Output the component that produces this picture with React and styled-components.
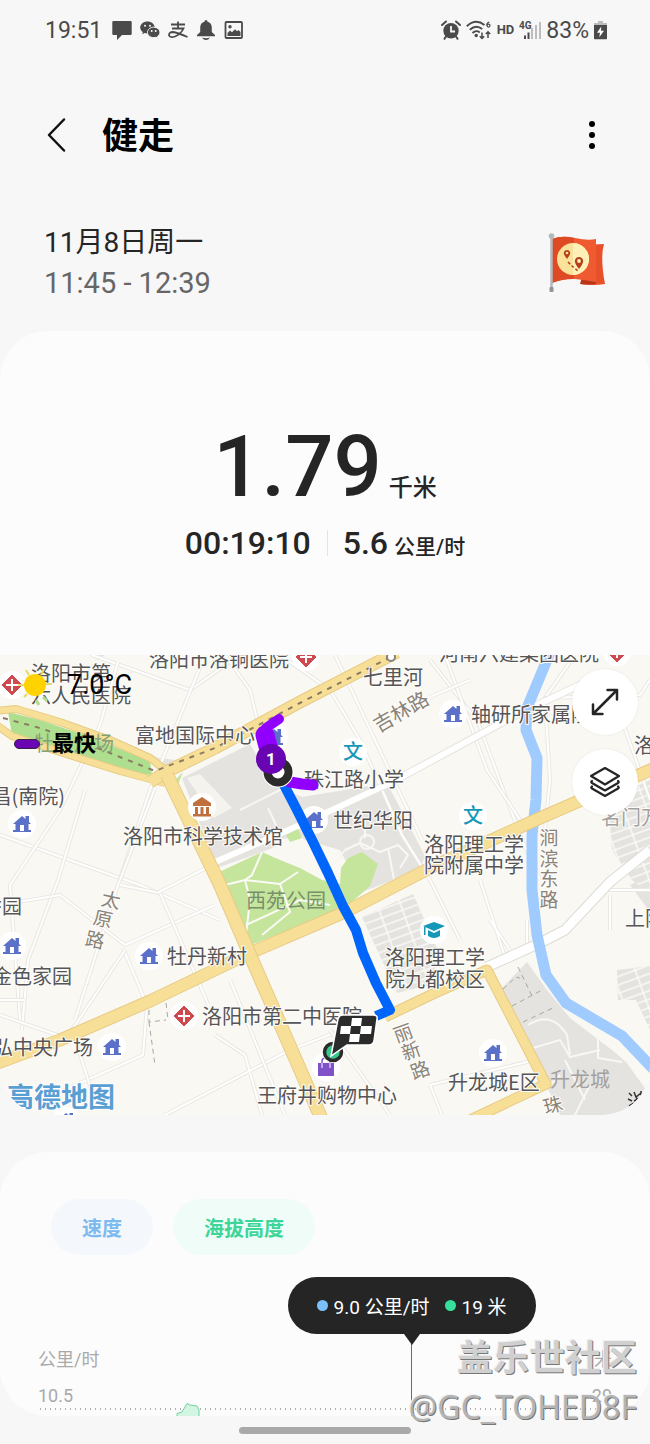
import React from "react";
import styled, { createGlobalStyle, css } from "styled-components";

const GlobalStyle = createGlobalStyle`
  *, *::before, *::after { box-sizing: border-box; }
  body {
    margin: 0;
    background: #f7f7f7;
    color: #252525;
    font-family: Roboto, "Noto Sans CJK SC", sans-serif;
  }
  button { font: inherit; border: 0; padding: 0; background: none; cursor: pointer; }
  svg { display: block; }
  h1, p { margin: 0; }
`;

const Page = styled.div`
  position: relative;
  overflow: hidden;
`;

/* ---------- status bar ---------- */

const StatusBar = styled.div`
  display: flex;
  justify-content: space-between;
  align-items: center;
  height: 60px;
  padding: 0 43px 0 45px;
  color: #4a4a4a;
  font-size: 23px;
`;

const StatusGroup = styled.div`
  display: flex;
  align-items: center;
  gap: ${(p) => p.$gap}px;
`;

const StatusIcons = styled(StatusGroup)`
  margin-left: 2px;
`;

const HdMark = styled.span`
  font-size: 13px;
  font-weight: 700;
  line-height: 16px;
`;

const ChatIcon = () => (
  <svg width="20" height="20" viewBox="0 0 20 20" fill="#4a4a4a">
    <path d="M1.500 1h17a1.200 1.200 0 0 1 1.200 1.200v11.600a1.200 1.200 0 0 1-1.200 1.200H10l-5 5v-5H1.500A1.200 1.200 0 0 1 .300 13.800V2.200A1.200 1.200 0 0 1 1.500 1z" />
  </svg>
);

const WechatIcon = () => (
  <svg width="20" height="20" viewBox="0 0 20 20">
    <path fill="#4a4a4a" d="M7.500 1.500C3.400 1.500.200 4.200.200 7.500c0 1.900 1 3.500 2.600 4.600l-.600 2.100 2.400-1.200c.900.300 1.900.500 2.900.500 4 0 7.200-2.700 7.200-6s-3.200-6-7.200-6z" />
    <g fill="#f7f7f7">
      <circle cx="5" cy="5.800" r="1" /><circle cx="10" cy="5.800" r="1" />
    </g>
    <path fill="#4a4a4a" stroke="#f7f7f7" strokeWidth="1" d="M13.700 7.200c-3.500 0-6.200 2.300-6.200 5.200s2.700 5.200 6.200 5.200c.800 0 1.500-.100 2.200-.300l2 1.100-.500-1.900c1.500-1 2.500-2.400 2.500-4.100 0-2.900-2.800-5.200-6.200-5.200z" />
    <g fill="#f7f7f7">
      <circle cx="11.700" cy="11" r="1" /><circle cx="15.700" cy="11" r="1" />
    </g>
  </svg>
);

/* Alipay mark */
const AlipayIcon = () => (
  <svg width="20" height="20" viewBox="0 0 20 20" fill="none" stroke="#4a4a4a" strokeWidth="1.800">
    <path d="M3 4.500H17M10 1.500V8.500M4 8.500H15.500Q13 14 7 16.500Q2 18 1 15.500Q.800 12 5 12Q9 12.300 19.500 17" />
  </svg>
);

const BellIcon = () => (
  <svg width="20" height="20" viewBox="0 0 20 20" fill="#4a4a4a">
    <path d="M10 0a1.500 1.500 0 0 0-1.500 1.500v.300C5.700 2.500 4.200 4.800 4.200 7.500v4.500L1 15v1.300h18V15l-3.200-3V7.500c0-2.700-1.500-5-4.300-5.700v-.300A1.500 1.500 0 0 0 10 0z" />
    <path d="M6 17.500q4 1.500 8 0Q12.500 20 10 20t-4-2.500z" />
  </svg>
);

const ImageIcon = () => (
  <svg width="20" height="20" viewBox="0 0 20 20">
    <rect x="1.500" y="2" width="16.500" height="16" rx="1" fill="none" stroke="#4a4a4a" strokeWidth="1.800" />
    <circle cx="6" cy="6.700" r="1.700" fill="#4a4a4a" />
    <path fill="#4a4a4a" d="M3.500 16v-3l2.500-2.500 2 1.800 3-3 2 2L14.500 10l2 2v4z" />
  </svg>
);

const AlarmIcon = () => (
  <svg width="20" height="20" viewBox="0 0 20 20">
    <circle cx="10" cy="10.800" r="7.700" fill="#4a4a4a" />
    <path d="M1 5l4-3.500M19 5l-4-3.500M5 16.500l-1.500 2.300M15 16.500l1.500 2.300" stroke="#4a4a4a" strokeWidth="2" strokeLinecap="round" />
    <path d="M10 6v5.500h4" fill="none" stroke="#f7f7f7" strokeWidth="1.800" />
  </svg>
);

const WifiIcon = () => (
  <svg width="26" height="20" viewBox="0 0 26 20" fill="none" stroke="#4a4a4a" strokeWidth="1.900">
    <path d="M.800 6.200Q9.500-2 18.500 5M3.800 9.800Q10 4 16.200 9M6.500 13Q10 9.600 13.800 12.400" />
    <circle cx="10.200" cy="15.500" r="1.700" fill="#4a4a4a" stroke="none" />
    <path d="M16 12.500v6M13.800 16.300l2.200 2.200 2.200-2.200M22 18v-6M19.800 14l2.200-2.200 2.200 2.200" strokeWidth="1.500" />
    <path d="M23.300 2.200q-2.500.300-2.500 3.300" strokeWidth="1.200" />
    <circle cx="22.500" cy="5.600" r="1.500" strokeWidth="1.200" />
  </svg>
);

const SignalIcon = () => (
  <svg width="22" height="20" viewBox="0 0 22 20">
    <g fill="#bdbdbd">
      <rect x="12" y="8" width="2" height="11" /><rect x="16" y="5" width="2" height="14" /><rect x="20" y="2" width="2" height="17" />
    </g>
    <g fill="#4a4a4a">
      <rect x="5" y="15.500" width="2" height="3.500" /><rect x="8.500" y="12.500" width="2" height="6.500" />
    </g>
    <text x="0" y="8.500" fontSize="10" fontWeight="700" fill="#4a4a4a">4G</text>
  </svg>
);

const BatteryIcon = () => (
  <svg width="13" height="20" viewBox="0 0 13 20">
    <path d="M4 1h5v2h4v4H0V3h4z" fill="#bdbdbd" />
    <path d="M0 5h13v13.500a.700.700 0 0 1-.700.700H.700a.700.700 0 0 1-.700-.700z" fill="#4a4a4a" />
    <path d="M7.300 6.500L3 12.700h3l-.700 4.500L10 10.800H7z" fill="#fff" />
  </svg>
);

/* ---------- header ---------- */

const Header = styled.header`
  display: flex;
  align-items: center;
  margin-top: 40px;
  height: 70px;
  padding: 0 44px;
`;

const IconButton = styled.button`
  display: grid;
  place-items: center;
  width: 28px;
  height: 40px;
`;

const Title = styled.h1`
  flex: 1;
  margin-left: 30px;
  padding-top: 4px;
  color: #000;
  font-size: 36px;
  font-weight: 700;
  line-height: 52px;
`;

const Session = styled.section`
  display: flex;
  justify-content: space-between;
  align-items: center;
  padding: 52px 44px 27px;
`;

const SessionLine = styled.p`
  font-size: ${(p) => (p.$muted ? 29 : 28)}px;
  line-height: 41px;
  color: ${(p) => (p.$muted ? "#666" : "#252525")};
`;

const FlagBadge = () => (
  <svg width="58" height="62" viewBox="0 0 58 62">
    <path d="M36 13l20-1q-4 14 1 40-12 2-24 0z" fill="#e8502a" />
    <path d="M34 45l14 2v5q-8 1-16 0z" fill="#b93718" />
    <path d="M4 7q10-4 23-1t21 1v43q-11-2-21-3T4 51z" fill="#ef5a30" />
    <path d="M4 7q10-4 22-1v41Q14 47 4 51z" fill="#de4a24" />
    <circle cx="25" cy="27" r="16" fill="#fbe29a" />
    <path d="M25 11a16 16 0 0 1 0 32z" fill="#fff0b8" />
    <path d="M20 30l4 4 6 5" fill="none" stroke="#b5401c" strokeWidth="1.500" strokeDasharray="3 2" />
    <path d="M19 27q-4-5-3-7a3.200 3.200 0 0 1 6 0q1 2-3 7zM31 37q-5-6-4-9a4.200 4.200 0 0 1 8 0q1 3-4 9z" fill="#b5401c" />
    <circle cx="19" cy="21" r="1.300" fill="#fbe29a" /><circle cx="31" cy="29" r="1.900" fill="#fff0b8" />
    <path d="M3.500 6v50" stroke="#b4b8bd" strokeWidth="2.500" />
    <circle cx="3.500" cy="4" r="2.800" fill="#b4b8bd" />
    <rect x="1.500" y="55" width="4" height="5" rx="1" fill="#8f9499" />
  </svg>
);

/* ---------- cards ---------- */

const Card = styled.section`
  background: #fcfcfc;
  border-radius: 48px;
  overflow: hidden;
`;

const Stats = styled.div`
  padding: 86px 16px 92px;
`;

const StatRow = styled.div`
  display: flex;
  justify-content: center;
  align-items: baseline;
  ${(p) =>
    p.$large
      ? css`font-size: 85px; line-height: 100px; gap: 7px;`
      : css`font-size: 32px; line-height: 40px; margin-top: 6px;`}
  font-weight: 500;
`;

const Unit = styled.span`
  font-size: ${(p) => p.$size}px;
  line-height: 32px;
`;

const StatPart = styled.span`
  display: inline-flex;
  align-items: baseline;
  gap: 6px;
  & + & {
    margin-left: 16px;
    padding-left: 16px;
    background: linear-gradient(#e4e4e4, #e4e4e4) left center / 1px 26px no-repeat;
  }
`;

/* ---------- map ---------- */

const MapFrame = styled.div`
  position: relative;
  border-radius: 0 0 48px 48px;
  overflow: hidden;
`;

const MapSvg = styled.svg`
  width: 100%;
  height: auto;
  background: #faf8f3;
`;

const MapText = styled.text`
  font-family: "Noto Sans CJK SC", sans-serif;
  font-size: ${(p) => p.$size || 20}px;
  font-weight: ${(p) => p.$weight || 400};
  fill: ${(p) => p.$color || "#555557"};
  stroke: ${(p) => p.$halo || "#fdfcf9"};
  stroke-width: ${(p) => (p.$halo === "none" ? 0 : 2)}px;
  paint-order: stroke;
`;

const MapInfo = styled.div`
  position: absolute;
  top: 12px;
  left: 14px;
  color: #000;
`;

const Weather = styled.div`
  display: flex;
  align-items: center;
  gap: 11px;
  height: 36px;
  font-size: 27px;
`;

const Legend = styled.div`
  display: flex;
  align-items: center;
  gap: 12px;
  margin-top: 25px;
  font-size: 22px;
  font-weight: 700;
  line-height: 32px;
`;

const LegendSwatch = styled.i`
  width: 26px;
  height: 10px;
  border: 1px solid #35204a;
  border-radius: 5px;
  background: #6a05b4;
`;

const MapTools = styled.div`
  position: absolute;
  top: 14px;
  right: 12px;
  display: flex;
  flex-direction: column;
  gap: 14px;
`;

const MapButton = styled.button`
  display: grid;
  place-items: center;
  width: 66px;
  height: 66px;
  border-radius: 50%;
  background: #fff;
  box-shadow: 0 0 2px rgba(0, 0, 0, 0.1);
`;

const labels = [
  [31, 681, "洛阳市第"],
  [31, 703, "六人民医院"],
  [149, 667, "洛阳市洛铜医院"],
  [363, 685, "七里河"],
  [135, 743, "富地国际中心"],
  [-16, 804, "昌(南院)", "end"],
  [123, 844, "洛阳市科学技术馆"],
  [304, 787, "珠江路小学"],
  [333, 828, "世纪华阳"],
  [471, 722, "轴研所家属院"],
  [439, 661, "河南六建集团医院"],
  [634, 753, "洛阳"],
  [424, 852, "洛阳理工学"],
  [424, 873, "院附属中学"],
  [167, 964, "牡丹新村"],
  [385, 965, "洛阳理工学"],
  [385, 987, "院九都校区"],
  [202, 1024, "洛阳市第二中医院"],
  [625, 926, "上阳"],
  [-18, 914, "香园"],
  [-8, 984, "金色家园"],
  [-7, 1055, "弘中央广场"],
  [448, 1090, "升龙城E区"],
  [257, 1103, "王府井购物中心"],
];

const streetChars = [
  [401, 719, "吉林路", -30],
  [549, 845, "涧", 0],
  [549, 866, "滨", 0],
  [549, 886, "东", 0],
  [549, 907, "路", 0],
  [111, 907, "太", 12],
  [103, 926, "原", 12],
  [95, 947, "路", 12],
  [403, 1040, "丽", -20],
  [411, 1058, "新", -20],
  [420, 1077, "路", -20],
  [553, 1112, "珠", -15],
];

const houses = [[22, 824], [12, 946], [149, 956], [112, 1047], [314, 820], [453, 714], [493, 1053], [274, 737], [66, 1121]];
const hospitals = [[12, 685], [306, 657], [617, 652], [184, 1016]];

const lanes = [
  "M0 835L75 862L140 885L220 920",
  "M92 655L190 690L240 655",
  "M118 662L100 725L60 810L10 885L20 1020",
  "M205 655L150 790L118 885L75 1020",
  "M155 788L120 880",
  "M225 655L250 690L262 740",
  "M85 790L58 880L28 960L22 1030",
  "M0 905L60 895L125 945L215 905",
  "M120 885L160 893L208 1004",
  "M157 893L218 862",
  "M123 948L147 1005L143 1055L60 1092",
  "M125 950L72 1030L98 1110",
  "M0 1015L60 1036M0 1000H25",
  "M280 655L330 690L360 740L402 835L430 880L460 940",
  "M335 655L422 840",
  "M430 660L478 722L522 840L540 880",
  "M445 655L487 770L527 830",
  "M430 697L470 680M575 655L545 698L550 780L545 830",
  "M545 698L640 695L650 680M615 700L650 800",
  "M480 880L506 960M490 920L510 950M527 920V950",
  "M600 890H650M610 895V930",
  "M215 1035L245 1055L262 1115M165 1115L290 1050L420 1000",
  "M230 980L285 1115M330 1030L390 1115",
  "M430 1085L535 1060M430 1085L442 1115",
];

const House = ({ at: [x, y] }) => (
  <g transform={`translate(${x} ${y})`}>
    <circle r="14" fill="#fff" />
    <path fill="#5b70c8" d="M-9 0L0-8l3.500 3V-8H7v6l2 2H6.500v6H9v2H-9V6h2.500V0z" />
    <rect x="-2" y="1" width="4" height="6" fill="#fff" />
  </g>
);

const Hospital = ({ at: [x, y] }) => (
  <g transform={`translate(${x} ${y})`}>
    <circle r="14" fill="#fff" />
    <path d="M0-10L10 0L0 10L-10 0z" fill="#cf4a4e" stroke="#cf4a4e" strokeLinejoin="round" />
    <path d="M-6 0H6M0-6V6" stroke="#fff" strokeWidth="2" />
  </g>
);

const Road = ({ d, width = 12 }) => (
  <>
    <path d={d} fill="none" stroke="#e6cb84" strokeWidth={width} strokeLinejoin="round" />
    <path d={d} fill="none" stroke="#f8df98" strokeWidth={width - 2} strokeLinejoin="round" />
  </>
);

const RouteMap = () => (
  <MapSvg viewBox="0 655 650 460" role="img" aria-label="路线地图">
    <defs>
      <pattern id="blocks" width="22" height="8" patternUnits="userSpaceOnUse" patternTransform="rotate(-20)">
        <path d="M0 1H22M1 0V8" stroke="#fbfaf7" strokeWidth="1.500" />
      </pattern>
    </defs>

    {/* built-up areas */}
    <g fill="#e5e3df">
      <path d="M182 778L250 744L275 786L302 797L387 783L425 856L420 870L362 892L340 850L298 838L262 852L217 868z" />
      <path d="M362 917L413 894L440 955L430 985L397 993z" />
      <path d="M500 990L527 962L547 990L570 1018L612 1050L626 1062L650 1095V1115H560L546 1084z" />
      <path d="M608 800L650 780V895L632 880L612 850z" />
      <path d="M617 970L650 966V1030L636 1000H618zM630 885L650 876V912z" />
      <path d="M152 757L175 760L185 770L160 773zM90 655H105L98 660z" />
    </g>
    <g fill="url(#blocks)">
      <path d="M362 917L413 894L440 955L430 985L397 993z" />
      <path d="M608 800L650 780V895L632 880L612 850z" />
      <path d="M617 970L650 966V1030L636 1000H618z" />
    </g>
    <path d="M187 778L200 774L232 808L214 818z" fill="#f5f3ee" />
    <path d="M275 840L302 836L322 876L280 858z" fill="#faf8f3" />

    {/* side streets */}
    <g fill="none" strokeLinejoin="round">
      {lanes.map((d) => (
        <g key={d}>
          <path d={d} stroke="#eae8e2" strokeWidth="4" />
          <path d={d} stroke="#fff" strokeWidth="2" />
        </g>
      ))}
      <path d="M240 810L300 780M268 808L276 825M325 875L345 850L360 843L380 852L398 845L408 855L400 868M365 838V820M388 848L395 885" stroke="#f8f7f4" strokeWidth="2" />
      <circle cx="367" cy="842" r="7" stroke="#f8f7f4" strokeWidth="2" />
      <path d="M528 1025Q552 1010 567 1035L570 1055M533 1048L560 1040L570 1057L600 1050M598 1038V1058L622 1062M565 1060L585 1100M560 1075L545 1090M590 1085L575 1115" stroke="#f8f7f4" strokeWidth="2" />
      <path d="M503 989L516 977L520 978M512 1006L542 990M523 1022L555 1007M518 967L532 996" stroke="#aaa7a0" strokeDasharray="5 4" />
      <path d="M166 1003L168 1020M149 1010V1022L166 1020M149 1022L155 1065" stroke="#aaa7a0" strokeDasharray="5 4" />
      <g>
        <path d="M215 862L300 825L392 782L520 713L590 680" stroke="#e6e3dd" strokeWidth="8" />
        <path d="M215 862L300 825L392 782L520 713L590 680" stroke="#fff" strokeWidth="6" />
        <path d="M487 967L540 943L565 930L610 882L650 850" stroke="#dedbd5" strokeWidth="11" />
        <path d="M487 967L540 943L565 930L610 882L650 850" stroke="#fff" strokeWidth="9" />
      </g>
    </g>

    {/* parks */}
    <path fill="#c5e59d" d="M217 873L262 852L280 860L300 868L322 880L340 884L341 868L348 858L362 852L378 864L370 886L345 908L248 946L238 930z" />
    <path fill="#c5e59d" d="M286 835L298 829L302 838L290 842zM175 780l8-8-4 10v8z" />
    <path d="M225 885L245 880L280 884L298 872M262 852L252 875L245 880L250 900L246 935M246 925L300 900L330 905M280 884L290 912L262 935" fill="none" stroke="#fbfaf6" strokeWidth="2" />
    <path d="M8 712L40 720L90 737L150 761L152 775L120 771L60 752L12 735z" fill="#aedf8f" />

    {/* river */}
    <path d="M551 650L527 708L526 730L537 758L536 800L532 835V890L537 935L546 975L566 1003L622 1036L660 1076" fill="none" stroke="#a0cbff" strokeWidth="11" strokeLinejoin="round" />

    {/* main roads */}
    <Road d="M-5 724L12 736L60 752L120 771L165 783" width={8} />
    <Road d="M-5 711L16 709L60 722L110 740L150 758L168 772" width={8} />
    <Road d="M150 782L170 770L215 748L300 702L397 652" width={13} />
    <Road d="M-5 1064L60 1040L150 1001L250 953L345 912L430 868L540 818L655 768" width={13} />
    <Road d="M167 775L220 885L250 955L295 1058L322 1120" width={14} />
    <Road d="M385 1017L435 993L487 970L546 1084L470 1120" width={11} />
    <path d="M3 718L40 728L100 749L155 771L215 748L300 703L391 657" fill="none" stroke="#8b7c61" strokeWidth="2" strokeDasharray="5 6" />
    <circle cx="391" cy="657" r="4" fill="#fff" stroke="#86837c" strokeWidth="2" />

    {/* points of interest */}
    {houses.map((p) => <House key={p.join()} at={p} />)}
    {hospitals.map((p) => <Hospital key={p.join()} at={p} />)}
    <g transform="translate(202 807)">
      <circle r="14" fill="#fff" />
      <path d="M0-10L9-4V-1H-9V-4zM-7 0h3v7h-3zM-1.500 0h3v7h-3zM4 0h3v7H4zM-9 7H9v2.500H-9z" fill="#c0703c" />
    </g>
    {[[353, 752], [473, 816]].map(([x, y]) => (
      <g key={x}>
        <circle cx={x} cy={y} r="14" fill="#fff" />
        <MapText x={x} y={y + 7} textAnchor="middle" $color="#1597b8" $weight={500} $halo="none">文</MapText>
      </g>
    ))}
    <g transform="translate(434 930)">
      <circle r="14" fill="#fff" />
      <path d="M0-8L11-4L0 1L-11-4zM-6 0L0 3L6 0v6q-6 4-12 0zM-10-3h1.500V5H-10z" fill="#1597b8" />
    </g>
    <g transform="translate(326 1067)">
      <circle r="14" fill="#fff" />
      <rect x="-8" y="-4" width="16" height="13" fill="#8052c8" />
      <path d="M-4-1V-6q0-3 4-3t4 3V-1" fill="none" stroke="#8052c8" strokeWidth="1.500" />
      <path d="M-4-4V1M4-4V1" stroke="#fff" />
    </g>

    {/* place names */}
    {labels.map(([x, y, text, side]) => (
      <MapText key={`${x},${y}`} x={side ? 65 : x} y={y} textAnchor={side || "start"}>{text}</MapText>
    ))}
    <MapText x="34" y="751" $color="#86a173" $halo="none">牡丹广场</MapText>
    <MapText x="246" y="908" $color="#77906a" $halo="none">西苑公园</MapText>
    <MapText x="601" y="825" $color="#a2a19e">名门万</MapText>
    <MapText x="550" y="1087" $color="#a2a19e" $halo="none">升龙城</MapText>
    {streetChars.map(([x, y, text, angle]) => (
      <MapText
        key={`${x},${y}`}
        x={x}
        y={y}
        textAnchor="middle"
        transform={`rotate(${angle} ${x} ${y - 7})`}
        $color="#8a8378"
        $size={text.length > 1 ? 20 : 19}
      >
        {text}
      </MapText>
    ))}
    <MapText x="7" y="1107" $color="#5a9fd4" $size={27} $weight={700} $halo="#fff">高德地图</MapText>

    {/* walked route */}
    <g fill="none" strokeLinecap="round" strokeLinejoin="round">
      <path d="M283 783L297 810L313 842L328 873L343 906L356 930L363 953L376 983L390 1010L376 1016" stroke="#0066fb" strokeWidth="10" strokeLinecap="butt" />
      <path d="M279 719L266 728L262 736L269 748" stroke="#9100ff" strokeWidth="10" />
      <path d="M265 735L269 750" stroke="#9100ff" strokeWidth="19" />
      <path d="M290 782L302 784L313 785" stroke="#9100ff" strokeWidth="11" />
    </g>
    <circle cx="278" cy="772" r="15.500" fill="#fff" />
    <circle cx="278" cy="772" r="10.500" fill="#fff" stroke="#2b2b2b" strokeWidth="8" />
    <circle cx="271" cy="759" r="15" fill="#6904b2" />
    <text x="271" y="765" textAnchor="middle" fontSize="17" fontWeight="700" fill="#fff">1</text>

    {/* finish flag */}
    <circle cx="333" cy="1052" r="11" fill="#fff" />
    <circle cx="333" cy="1052" r="8.500" fill="#35c88a" stroke="#2b2b2b" strokeWidth="3.500" />
    <path d="M343 1015H373Q378 1015 377 1019L374 1041Q373 1045 369 1045H347L331 1056L338 1019Q339 1015 343 1015z" fill="#2b2b2b" stroke="#fff" strokeWidth="1.500" />
    <path d="M352 1018h10l-1 8h-10zM341 1026h10l-1 8h-10zM361 1026h11l-1 8h-11zM350 1034h10l-1 8h-10z" fill="#fff" />

    {/* scale mark in the corner */}
    <path d="M629 1093l3 3M628 1099l4 2M629 1106l5-3M634 1092l2 5 5-4M636 1097l3 5M634 1101l8-4M641 1091v6" fill="none" stroke="#333" strokeWidth="1.500" />
  </MapSvg>
);

const SunIcon = () => (
  <svg width="42" height="42" viewBox="0 0 42 42">
    <g stroke="#e8d968" strokeWidth="2">
      <path d="M12 6l3 5M30 5l-3 6M4 21h6M32 20h6M10 33l3-3" />
      <path d="M22 36l3 5M29 33l4 4" stroke="#b5dc8a" strokeWidth="3" />
    </g>
    <circle cx="21" cy="21" r="11" fill="#ffd200" />
  </svg>
);

/* ---------- chart card ---------- */

const ChartCard = styled(Card)`
  margin-top: 37px;
  padding-top: 47px;
`;

const Chips = styled.div`
  display: flex;
  gap: 20px;
  padding: 0 51px;
`;

const Chip = styled.button`
  height: 56px;
  padding: 0 31px;
  border-radius: 28px;
  font-size: 20px;
  font-weight: 700;
  color: ${(p) => p.$color};
  background: ${(p) => p.$tint};
`;

const Plot = styled.div`
  position: relative;
  margin: 0 38px;
  padding-top: 93px;
  color: #a9a9a9;
`;

const AxisRow = styled.div`
  display: flex;
  justify-content: space-between;
  font-size: 18px;
  line-height: 24px;
  & + & { margin-top: 12px; }
`;

const GridLine = styled.div`
  height: 8px;
  background: radial-gradient(circle, #b0b0b0 1px, transparent 1px) left top / 5px 2px repeat-x;
`;

const AreaShape = styled.svg`
  position: absolute;
  bottom: 0;
  left: 24%;
`;

const Cursor = styled.div`
  position: absolute;
  top: 22px;
  bottom: 0;
  left: 65%;
  width: 1px;
  background: #6b6b6b;
`;

const Tooltip = styled.div`
  position: absolute;
  top: 0;
  left: 50%;
  transform: translateX(-50%);
  display: flex;
  align-items: center;
  gap: 15px;
  height: 57px;
  padding: 0 29px;
  border-radius: 29px;
  background: #252525;
  color: #fff;
  font-size: 19px;
  white-space: nowrap;
  &::after {
    content: "";
    position: absolute;
    top: 100%;
    left: 50%;
    margin-left: -8px;
    border: 8px solid transparent;
    border-top: 11px solid #252525;
    border-bottom: 0;
  }
`;

const Reading = styled.span`
  display: flex;
  align-items: center;
  gap: 6px;
  &::before {
    content: "";
    width: 11px;
    height: 11px;
    border-radius: 50%;
    background: ${(p) => p.$dot};
  }
`;

const Watermark = styled.div`
  position: absolute;
  right: 13px;
  bottom: 13px;
  text-align: right;
  color: #d0d0d0;
  text-shadow: 1px 1px 0 #777, -1px -1px 0 #f2f2f2;
`;

const WatermarkName = styled.p`
  font-size: 36px;
  font-weight: 700;
  line-height: 48px;
`;

const WatermarkUser = styled.p`
  color: #b4b4b4;
  font-family: "Noto Sans", sans-serif;
  font-size: 32px;
  line-height: 48px;
`;

const HomeBar = styled.div`
  display: flex;
  justify-content: center;
  padding: 11px 0 10px;
  &::before {
    content: "";
    width: 172px;
    height: 7px;
    border-radius: 4px;
    background: #a9a9a9;
  }
`;

export default function App() {
  return (
    <Page>
      <GlobalStyle />
      <StatusBar>
        <StatusGroup $gap={8}>
          <span>19:51</span>
          <StatusIcons $gap={8}>
            <ChatIcon />
            <WechatIcon />
            <AlipayIcon />
            <BellIcon />
            <ImageIcon />
          </StatusIcons>
        </StatusGroup>
        <StatusGroup $gap={5}>
          <AlarmIcon />
          <WifiIcon />
          <HdMark>HD</HdMark>
          <SignalIcon />
          <span>83%</span>
          <BatteryIcon />
        </StatusGroup>
      </StatusBar>

      <Header>
        <IconButton aria-label="返回">
          <svg width="24" height="36" viewBox="0 0 24 36" fill="none" stroke="#111" strokeWidth="2.500" strokeLinecap="round" strokeLinejoin="round">
            <path d="M18 2.500L3 18l15 15.500" />
          </svg>
        </IconButton>
        <Title>健走</Title>
        <IconButton aria-label="更多选项">
          <svg width="8" height="30" viewBox="0 0 8 30">
            <circle cx="4" cy="4" r="3" /><circle cx="4" cy="15" r="3" /><circle cx="4" cy="26" r="3" />
          </svg>
        </IconButton>
      </Header>

      <Session>
        <div>
          <SessionLine>11月8日周一</SessionLine>
          <SessionLine $muted>11:45 - 12:39</SessionLine>
        </div>
        <FlagBadge />
      </Session>

      <Card>
        <Stats>
          <StatRow $large>
            <span>1.79</span>
            <Unit $size={24}>千米</Unit>
          </StatRow>
          <StatRow>
            <StatPart>00:19:10</StatPart>
            <StatPart>
              5.6 <Unit $size={21}>公里/时</Unit>
            </StatPart>
          </StatRow>
        </Stats>
        <MapFrame>
          <RouteMap />
          <MapInfo>
            <Weather>
              <SunIcon />
              <span>7.0°C</span>
            </Weather>
            <Legend>
              <LegendSwatch />
              最快
            </Legend>
          </MapInfo>
          <MapTools>
            <MapButton aria-label="展开地图">
              <svg width="30" height="30" viewBox="0 0 30 30" fill="none" stroke="#252525" strokeWidth="2.500" strokeLinecap="round" strokeLinejoin="round">
                <path d="M3 27L27 3M17.500 3H27v9.500M3 17.500V27h9.500" />
              </svg>
            </MapButton>
            <MapButton aria-label="地图图层">
              <svg width="32" height="32" viewBox="0 0 32 32" fill="none" stroke="#252525" strokeWidth="2.200" strokeLinecap="round" strokeLinejoin="round">
                <path d="M16 2L30 10L16 18.500L2 10z" />
                <path d="M3 15Q1.500 16 3 17L16 24.500L29 17Q30.500 16 29 15M3 20.500Q1.500 21.500 3 22.500L16 30L29 22.500Q30.500 21.500 29 20.500" />
              </svg>
            </MapButton>
          </MapTools>
        </MapFrame>
      </Card>

      <ChartCard>
        <Chips>
          <Chip $color="#7dbaf0" $tint="#f4f8fd">速度</Chip>
          <Chip $color="#3dd598" $tint="#f0fcf8">海拔高度</Chip>
        </Chips>
        <Plot>
          <AxisRow>
            <span>公里/时</span>
            <span>米</span>
          </AxisRow>
          <AxisRow>
            <span>10.5</span>
            <span>29</span>
          </AxisRow>
          <GridLine />
          <AreaShape width="26" height="14" viewBox="0 0 26 14">
            <path d="M1 15V11.500L6 10L11 1.500L14 3L21 4L23 8V15" fill="#d3f5e4" stroke="#6fd0a0" />
          </AreaShape>
          <Cursor>
            <Tooltip>
              <Reading $dot="#7cc0fb">9.0 公里/时</Reading>
              <Reading $dot="#35e09c">19 米</Reading>
            </Tooltip>
          </Cursor>
        </Plot>
      </ChartCard>
      <HomeBar />

      <Watermark>
        <WatermarkName>盖乐世社区</WatermarkName>
        <WatermarkUser>@GC_TOHED8F</WatermarkUser>
      </Watermark>
    </Page>
  );
}
